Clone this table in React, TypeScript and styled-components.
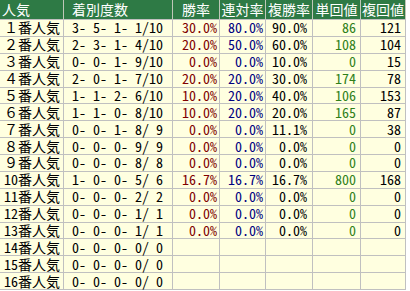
import React from 'react';
import styled, { createGlobalStyle } from 'styled-components';

const GlobalStyle = createGlobalStyle`
  body {
    margin: 0;
    background: #ffffff;
  }
`;

type Row = [string, string, string, string, string, string, string];

const rows: Row[] = [
  ['１番人気', '3- 5- 1- 1/10', '30.0%', '80.0%', '90.0%', '86', '121'],
  ['２番人気', '2- 3- 1- 4/10', '20.0%', '50.0%', '60.0%', '108', '104'],
  ['３番人気', '0- 0- 1- 9/10', '0.0%', '0.0%', '10.0%', '0', '15'],
  ['４番人気', '2- 0- 1- 7/10', '20.0%', '20.0%', '30.0%', '174', '78'],
  ['５番人気', '1- 1- 2- 6/10', '10.0%', '20.0%', '40.0%', '106', '153'],
  ['６番人気', '1- 1- 0- 8/10', '10.0%', '20.0%', '20.0%', '165', '87'],
  ['７番人気', '0- 0- 1- 8/ 9', '0.0%', '0.0%', '11.1%', '0', '38'],
  ['８番人気', '0- 0- 0- 9/ 9', '0.0%', '0.0%', '0.0%', '0', '0'],
  ['９番人気', '0- 0- 0- 8/ 8', '0.0%', '0.0%', '0.0%', '0', '0'],
  ['10番人気', '1- 0- 0- 5/ 6', '16.7%', '16.7%', '16.7%', '800', '168'],
  ['11番人気', '0- 0- 0- 2/ 2', '0.0%', '0.0%', '0.0%', '0', '0'],
  ['12番人気', '0- 0- 0- 1/ 1', '0.0%', '0.0%', '0.0%', '0', '0'],
  ['13番人気', '0- 0- 0- 1/ 1', '0.0%', '0.0%', '0.0%', '0', '0'],
  ['14番人気', '0- 0- 0- 0/ 0', '', '', '', '', ''],
  ['15番人気', '0- 0- 0- 0/ 0', '', '', '', '', ''],
  ['16番人気', '0- 0- 0- 0/ 0', '', '', '', '', ''],
];

// widths are the pixel pitch of each column, right grid line included
const columns = [
  { title: '人気', width: 64, align: 'left', head: 'left', pad: '0 0 0 4px', headPad: '0 0 0 2px', color: '#000000' },
  { title: '着別度数', width: 109, align: 'left', head: 'left', pad: '0 0 0 8px', headPad: '0 0 0 8px', color: '#000000' },
  { title: '勝率', width: 47, align: 'right', head: 'center', pad: '0 2px 0 0', headPad: '0', color: '#800000' },
  { title: '連対率', width: 46, align: 'right', head: 'center', pad: '0 2px 0 0', headPad: '0', color: '#000080' },
  { title: '複勝率', width: 47, align: 'right', head: 'center', pad: '0 5px 0 0', headPad: '0', color: '#000000' },
  { title: '単回値', width: 48, align: 'right', head: 'center', pad: '0 4px 0 0', headPad: '0', color: '#2f7f1a' },
  { title: '複回値', width: 45, align: 'right', head: 'center', pad: '0 4px 0 0', headPad: '0', color: '#000000' },
];

const Table = styled.table`
  border-collapse: separate;
  border-spacing: 0;
  table-layout: fixed;
  width: 406px;
  font-family: 'Noto Sans Mono CJK JP', 'Liberation Mono', 'Noto Sans CJK JP', monospace;
  font-size: 14px;
`;

const HeadCell = styled.th<{ $align: string; $pad: string }>`
  box-sizing: border-box;
  height: 20px;
  padding: ${(p) => p.$pad};
  background: #2e7a45;
  color: #ffffff;
  font-weight: normal;
  text-align: ${(p) => p.$align};
  line-height: 19px;
  white-space: nowrap;
  border-right: 1px solid #bfc7b8;
  border-bottom: 1px solid #c0c0c0;
`;

const Cell = styled.td<{ $align: string; $pad: string; $color: string }>`
  box-sizing: border-box;
  height: 16.875px;
  padding: ${(p) => p.$pad};
  background: #ffffe0;
  color: ${(p) => p.$color};
  text-align: ${(p) => p.$align};
  line-height: 15px;
  white-space: pre;
  border-right: 1px solid #c0c0c0;
  border-bottom: 1px solid #c0c0c0;
`;

export default function App() {
  return (
    <>
      <GlobalStyle />
      <Table>
        <colgroup>
          {columns.map((c) => (
            <col key={c.title} style={{ width: c.width }} />
          ))}
        </colgroup>
        <thead>
          <tr>
            {columns.map((c) => (
              <HeadCell key={c.title} $align={c.head} $pad={c.headPad}>
                {c.title}
              </HeadCell>
            ))}
          </tr>
        </thead>
        <tbody>
          {rows.map((r) => (
            <tr key={r[0]}>
              {r.map((v, i) => (
                <Cell
                  key={i}
                  $align={columns[i].align}
                  $pad={columns[i].pad}
                  $color={columns[i].color}
                >
                  {v}
                </Cell>
              ))}
            </tr>
          ))}
        </tbody>
      </Table>
    </>
  );
}
